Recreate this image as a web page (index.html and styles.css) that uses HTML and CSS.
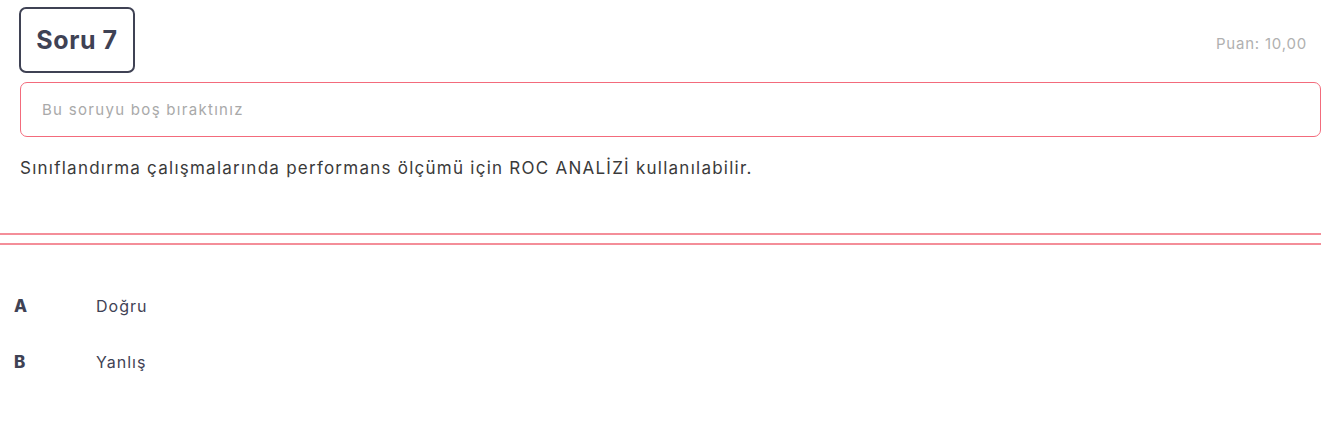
FILE: index.html
```html
<!DOCTYPE html>
<html lang="tr">
<head>
<meta charset="utf-8">
<link rel="stylesheet" href="styles.css">
</head>
<body>
<div class="question">
  <div class="q-head">
    <div class="q-number">Soru 7</div>
    <div class="q-points">Puan: 10,00</div>
  </div>
  <div class="q-alert">Bu soruyu boş bıraktınız</div>
  <p class="q-text">Sınıflandırma çalışmalarında performans ölçümü için ROC ANALİZİ kullanılabilir.</p>
</div>
<div class="divider"></div>
<ul class="options">
  <li class="option"><span class="opt-letter">A</span><span class="opt-text">Doğru</span></li>
  <li class="option"><span class="opt-letter">B</span><span class="opt-text">Yanlış</span></li>
</ul>
</body>
</html>
```
FILE: styles.css
```css
html, body {
  margin: 0;
  padding: 0;
  background: #fff;
}
body {
  font-family: "Inter", "Open Sans", sans-serif;
  color: #3f4254;
  width: 1321px;
  overflow: hidden;
}
.question {
  padding: 7px 0 0 19px;
}
.q-head {
  display: flex;
  justify-content: space-between;
  align-items: center;
  padding-right: 14px;
}
.q-number {
  box-sizing: border-box;
  width: 116px;
  height: 66px;
  border: 2.5px solid #3f4254;
  border-radius: 7px;
  display: flex;
  align-items: center;
  justify-content: center;
  font-size: 25px;
  font-weight: 700;
  letter-spacing: 0.6px;
  color: #3f4254;
}
.q-points {
  font-size: 15px;
  letter-spacing: 0.8px;
  color: #b0b0b0;
  margin-top: 6px;
}
.q-alert {
  box-sizing: border-box;
  margin-top: 9px;
  margin-left: 1px;
  height: 55px;
  border: 1.5px solid #f36b7c;
  border-radius: 7px;
  display: flex;
  align-items: center;
  padding-left: 21px;
  font-size: 15px;
  letter-spacing: 1.3px;
  color: #a9a9a9;
}
.q-text {
  margin: 19px 0 0 1px;
  font-size: 17px;
  letter-spacing: 1.25px;
  line-height: 24px;
  color: #3a3a3a;
}
.divider {
  margin-top: 53px;
  height: 8px;
  border-top: 2px solid #f48e99;
  border-bottom: 2px solid #f48e99;
}
.options {
  list-style: none;
  margin: 0;
  padding: 49px 0 0 14px;
}
.option {
  display: flex;
  align-items: center;
  height: 24px;
  margin-bottom: 32px;
}
.opt-letter {
  width: 82px;
  font-size: 17px;
  font-weight: 800;
  color: #3f4254;
}
.opt-text {
  font-size: 16px;
  letter-spacing: 1px;
  color: #3f4254;
}
```
